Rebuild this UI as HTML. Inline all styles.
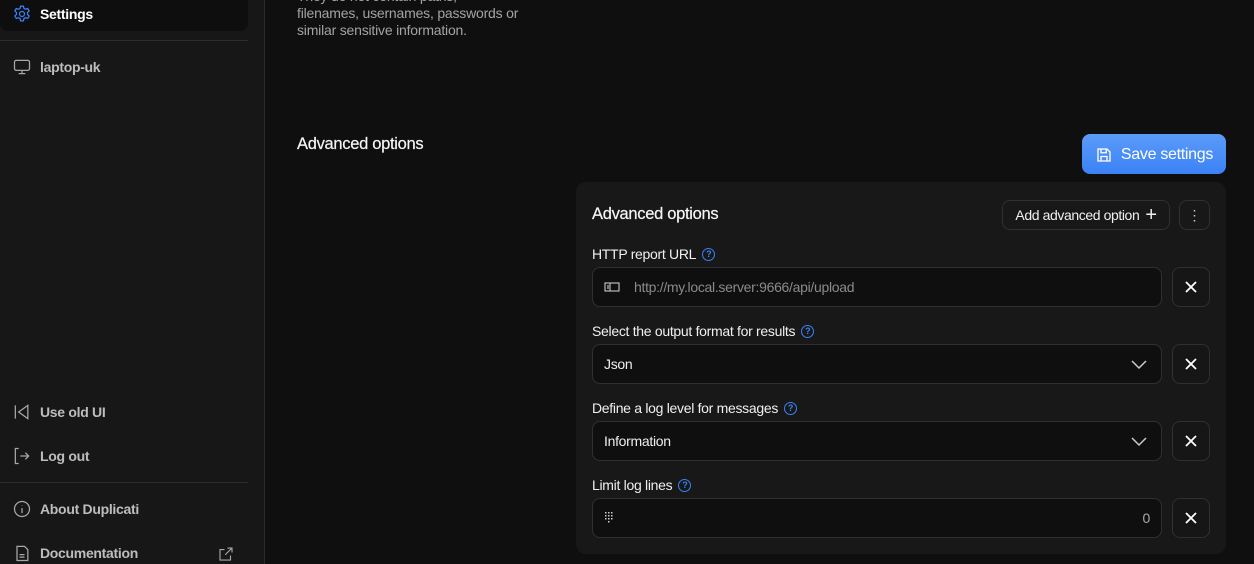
<!DOCTYPE html>
<html><head><style>
*{box-sizing:border-box;margin:0;padding:0}
body{width:1254px;height:564px;overflow:hidden;background:#0f0f0f;font-family:"Liberation Sans",sans-serif;color:#e5e5e5;position:relative;font-size:14px}
.a{position:absolute}
.side{left:0;top:0;width:265px;height:564px;background:#171717;border-right:1px solid #2a2a2a}
.item{position:absolute;left:12px;display:flex;align-items:center;gap:8px;font-weight:bold;font-size:14px;color:#bdbdbd;letter-spacing:-0.3px}
.item svg{width:20px;height:20px;fill:none;stroke:#a8a8a8;stroke-width:1.5}
.hr{position:absolute;left:0;width:248px;height:1px;background:#2c2c2c}
.card{left:576px;top:182px;width:650px;height:372px;background:#181818;border-radius:10px}
.lbl{position:absolute;left:16px;font-size:14px;color:#f0f0f0;display:flex;align-items:center;gap:6px;letter-spacing:-0.3px}
.q{width:13px;height:13px;border:1.3px solid #3b82f6;border-radius:50%;color:#3b82f6;font-size:9px;display:flex;align-items:center;justify-content:center;font-weight:bold}
.inp{position:absolute;left:16px;width:570px;height:40px;background:#0f0f0f;border:1px solid #303030;border-radius:8px;display:flex;align-items:center;padding:0 11px;font-size:14px;color:#eee;letter-spacing:-0.3px}
.x{position:absolute;left:596px;width:38px;height:40px;border:1px solid #303030;border-radius:8px;background:#161616;display:flex;align-items:center;justify-content:center}
.chev{position:absolute;right:14px;top:13px}
</style></head><body>
<div class="a side">
<div class="a" style="left:0;top:-10px;width:248px;height:41px;background:#0e0e0e;border-radius:8px"></div>
<div class="item" style="top:4px;color:#fff"><svg viewBox="0 0 24 24" style="stroke:#3b82f6"><circle cx="12" cy="12" r="3"/><path d="M10.3 2.5h3.4l.6 2.7 2 1.1 2.6-.9 1.7 2.9-2 1.9v2.3l2 1.9-1.7 2.9-2.6-.9-2 1.1-.6 2.7h-3.4l-.6-2.7-2-1.1-2.6.9-1.7-2.9 2-1.9v-2.3l-2-1.9 1.7-2.9 2.6.9 2-1.1z"/></svg>Settings</div>
<div class="hr" style="top:40px"></div>
<div class="item" style="top:57px"><svg viewBox="0 0 24 24"><rect x="3" y="4" width="18" height="12" rx="2"/><path d="M8 20h8M12 16v4"/></svg>laptop-uk</div>
<div class="item" style="top:402px"><svg viewBox="0 0 24 24"><path d="M4 4v16M19 4L8 12l11 8z"/></svg>Use old UI</div>
<div class="item" style="top:446px"><svg viewBox="0 0 24 24"><path d="M8 3H4v18h4M10 12h10M16 8l4 4-4 4"/></svg>Log out</div>
<div class="hr" style="top:482px"></div>
<div class="item" style="top:499px"><svg viewBox="0 0 24 24"><circle cx="12" cy="12" r="9"/><path d="M12 11v6M12 7.5v.5"/></svg>About Duplicati</div>
<div class="item" style="top:543px"><svg viewBox="0 0 24 24"><path d="M6 4h9l4 4v13H6z M9 14h6M9 17h6"/></svg>Documentation</div>
<svg class="a" style="left:217px;top:545px" width="18" height="18" viewBox="0 0 24 24" fill="none" stroke="#a8a8a8" stroke-width="1.5"><path d="M14 4h6v6M20 4l-9 9M18 14v6H4V6h6"/></svg>
</div>
<div class="a" style="left:297px;top:-12px;font-size:14px;line-height:17px;color:#a3a3a3;letter-spacing:-0.2px">They do not contain paths,<br>filenames, usernames, passwords or<br>similar sensitive information.</div>
<div class="a" style="left:297px;top:135px;font-size:16.5px;color:#f5f5f5;letter-spacing:-0.3px;font-weight:500;-webkit-text-stroke:0.2px #f5f5f5">Advanced options</div>
<div class="a" style="left:1082px;top:134px;width:144px;height:40px;background:linear-gradient(#5b9bf8,#3b82f6);border-radius:8px;display:flex;align-items:center;justify-content:center;gap:8px;font-size:16px;color:#fff;letter-spacing:-0.3px;padding-top:2px"><svg width="18" height="18" viewBox="0 0 24 24" fill="none" stroke="#fff" stroke-width="1.8"><path d="M4 4h12l4 4v12H4z M8 4v5h7V4 M8 20v-6h8v6"/></svg>Save settings</div>
<div class="a card">
<div class="a" style="left:16px;top:23px;font-size:16.5px;color:#f5f5f5;letter-spacing:-0.3px;-webkit-text-stroke:0.2px #f5f5f5">Advanced options</div>
<div class="a" style="left:426px;top:18px;width:168px;height:30px;border:1px solid #303030;border-radius:8px;display:flex;align-items:center;justify-content:center;gap:6px;font-size:14px;color:#f0f0f0;letter-spacing:-0.4px">Add advanced option <span style="font-size:20px;font-weight:300">+</span></div>
<div class="a" style="left:603px;top:18px;width:31px;height:30px;border:1px solid #303030;border-radius:8px;display:flex;align-items:center;justify-content:center;color:#ccc;font-size:14px">⋮</div>
<div class="lbl" style="top:64px">HTTP report URL <span class="q">?</span></div>
<div class="inp" style="top:85px;color:#8a8a8a"><svg width="16" height="12" viewBox="0 0 16 12" fill="none" stroke="#bbb" stroke-width="1.2" style="margin-right:14px"><rect x="1" y="2" width="14" height="8"/><path d="M6 2v8M3 5h2M3 7h2"/></svg>http://my.local.server:9666/api/upload</div>
<div class="x" style="top:85px"><svg width="14" height="14" viewBox="0 0 14 14" stroke="#fff" stroke-width="1.8"><path d="M2 2l10 10M12 2L2 12"/></svg></div>
<div class="lbl" style="top:141px">Select the output format for results <span class="q">?</span></div>
<div class="inp" style="top:162px">Json<svg class="chev" width="16" height="12" viewBox="0 0 16 12" fill="none" stroke="#ccc" stroke-width="1.5"><path d="M1 3l7 7 7-7"/></svg></div>
<div class="x" style="top:162px"><svg width="14" height="14" viewBox="0 0 14 14" stroke="#fff" stroke-width="1.8"><path d="M2 2l10 10M12 2L2 12"/></svg></div>
<div class="lbl" style="top:218px">Define a log level for messages <span class="q">?</span></div>
<div class="inp" style="top:239px">Information<svg class="chev" width="16" height="12" viewBox="0 0 16 12" fill="none" stroke="#ccc" stroke-width="1.5"><path d="M1 3l7 7 7-7"/></svg></div>
<div class="x" style="top:239px"><svg width="14" height="14" viewBox="0 0 14 14" stroke="#fff" stroke-width="1.8"><path d="M2 2l10 10M12 2L2 12"/></svg></div>
<div class="lbl" style="top:295px">Limit log lines <span class="q">?</span></div>
<div class="inp" style="top:316px;justify-content:space-between;color:#aaa"><svg width="12" height="14" viewBox="0 0 12 14" fill="#ccc"><rect x="1" y="1" width="1.5" height="1.5"/><rect x="4" y="1" width="1.5" height="1.5"/><rect x="7" y="1" width="1.5" height="1.5"/><rect x="1" y="4" width="1.5" height="1.5"/><rect x="4" y="4" width="1.5" height="1.5"/><rect x="7" y="4" width="1.5" height="1.5"/><rect x="1" y="7" width="1.5" height="1.5"/><rect x="4" y="7" width="1.5" height="1.5"/><rect x="7" y="7" width="1.5" height="1.5"/><rect x="4" y="10" width="1.5" height="1.5"/></svg><span>0</span></div>
<div class="x" style="top:316px"><svg width="14" height="14" viewBox="0 0 14 14" stroke="#fff" stroke-width="1.8"><path d="M2 2l10 10M12 2L2 12"/></svg></div>
</div>
</body></html>
